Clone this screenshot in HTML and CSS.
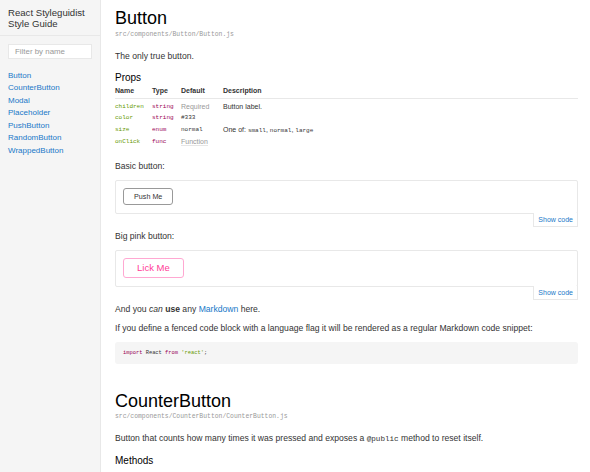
FILE: index.html
```html
<!DOCTYPE html>
<html lang="en">
<head>
<meta charset="utf-8">
<title>React Styleguidist Style Guide</title>
<link rel="stylesheet" href="styles.css">
</head>
<body>
<div class="layout">
  <aside class="sidebar">
    <header class="side-header">React Styleguidist<br>Style Guide</header>
    <div class="search"><input class="filter" type="text" placeholder="Filter by name"></div>
    <nav class="nav">
      <a href="#">Button</a>
      <a href="#">CounterButton</a>
      <a href="#">Modal</a>
      <a href="#">Placeholder</a>
      <a href="#">PushButton</a>
      <a href="#">RandomButton</a>
      <a href="#">WrappedButton</a>
    </nav>
  </aside>
  <main class="main">
    <section class="component">
      <h1 class="title">Button</h1>
      <div class="path">src/components/Button/Button.js</div>
      <p class="text desc">The only true button.</p>
      <h3 class="subtitle">Props</h3>
      <table class="props">
        <thead>
          <tr><th class="c1">Name</th><th class="c2">Type</th><th class="c3">Default</th><th>Description</th></tr>
        </thead>
        <tbody>
          <tr><td class="name">children</td><td class="type">string</td><td class="muted">Required</td><td>Button label.</td></tr>
          <tr><td class="name">color</td><td class="type">string</td><td class="mono">#333</td><td></td></tr>
          <tr><td class="name">size</td><td class="type">enum</td><td class="mono">normal</td><td>One of: <code>small</code>, <code>normal</code>, <code>large</code></td></tr>
          <tr><td class="name">onClick</td><td class="type">func</td><td class="muted"><span class="abbr">Function</span></td><td></td></tr>
        </tbody>
      </table>

      <p class="text example-label">Basic button:</p>
      <div class="example">
        <div class="preview"><button class="btn">Push Me</button></div>
        <div class="tabs"><a class="show-code" href="#">Show code</a></div>
      </div>

      <p class="text example-label tight">Big pink button:</p>
      <div class="example">
        <div class="preview"><button class="btn btn-pink">Lick Me</button></div>
        <div class="tabs"><a class="show-code" href="#">Show code</a></div>
      </div>

      <p class="text md1">And you <em>can</em> <strong>use</strong> any <a href="#">Markdown</a> here.</p>
      <p class="text md2">If you define a fenced code block with a language flag it will be rendered as a regular Markdown code snippet:</p>
      <pre class="code"><span class="kw">import</span> React <span class="kw">from</span> <span class="str">'react'</span>;</pre>
    </section>

    <section class="component second">
      <h1 class="title">CounterButton</h1>
      <div class="path">src/components/CounterButton/CounterButton.js</div>
      <p class="text desc">Button that counts how many times it was pressed and exposes a <code class="inline">@public</code> method to reset itself.</p>
      <h3 class="subtitle">Methods</h3>
    </section>
  </main>
</div>
</body>
</html>
```

FILE: styles.css
```css
html, body {
  margin: 0;
  padding: 0;
  background: #fff;
  overflow: hidden;
}
body {
  font-family: "Liberation Sans", Arial, Helvetica, sans-serif;
  color: #333;
}
.layout {
  display: flex;
  align-items: stretch;
  min-height: 100vh;
}
.sidebar {
  width: 100px;
  flex: 0 0 100px;
  background: #f5f5f5;
  border-right: 1px solid #e8e8e8;
  min-height: 100vh;
}
.side-header {
  font-size: 9.6px;
  line-height: 11px;
  padding: 6.5px 8px 6.5px;
  border-bottom: 1px solid #e8e8e8;
  color: #333;
}
.search {
  padding: 8px 8px 0;
}
.filter {
  display: block;
  box-sizing: border-box;
  width: 84px;
  height: 15px;
  margin: 0;
  padding: 0 6px;
  border: 1px solid #e8e8e8;
  background: #fff;
  font-family: "Liberation Sans", Arial, sans-serif;
  font-size: 7.9px;
  color: #333;
  outline: none;
}
.filter::placeholder {
  color: #999;
}
.nav {
  display: flex;
  flex-direction: column;
  padding: 10.5px 8px 0;
}
.nav a {
  font-size: 8px;
  line-height: 12.5px;
  color: #1978c8;
  text-decoration: none;
}
.main {
  flex: 1 1 auto;
  min-width: 0;
  padding: 8px 12px 0 14px;
}
.title {
  margin: 0;
  font-size: 18px;
  line-height: 20px;
  font-weight: normal;
  color: #000;
}
.path {
  margin-top: 2px;
  font-family: "Liberation Mono", "Courier New", monospace;
  font-size: 6.4px;
  line-height: 10px;
  color: #999;
}
.text {
  margin: 0;
  font-size: 8.6px;
  line-height: 12px;
  color: #333;
}
.desc {
  margin-top: 10px;
}
.subtitle {
  margin: 10px 0 0;
  font-size: 10px;
  line-height: 12px;
  font-weight: normal;
  color: #000;
}
.props {
  width: 100%;
  border-collapse: collapse;
  font-size: 7px;
}
.props th {
  text-align: left;
  font-weight: bold;
  color: #333;
  line-height: 9px;
  padding: 2px 0 3px;
  border-bottom: 1px solid #e8e8e8;
}
.props th.c1 { width: 37px; }
.props th.c2 { width: 29px; }
.props th.c3 { width: 42px; }
.props td {
  padding: 2.3px 0 0;
  height: 9px;
  line-height: 9px;
  vertical-align: top;
  color: #333;
}
.props tbody tr:first-child td {
  padding-top: 3px;
}
.props td.name {
  font-family: "Liberation Mono", monospace;
  font-size: 6px;
  color: #690;
}
.props td.type {
  font-family: "Liberation Mono", monospace;
  font-size: 6px;
  color: #905;
}
.props td.mono {
  font-family: "Liberation Mono", monospace;
  font-size: 6px;
  color: #333;
}
.props td.muted {
  color: #999;
}
.props .abbr {
  border-bottom: 1px solid #e6e6e6;
}
.props code {
  font-family: "Liberation Mono", monospace;
  font-size: 6px;
}
.example-label {
  margin-top: 14px;
}
.example-label.tight {
  margin-top: 3px;
}
.example {
  margin-top: 8px;
}
.preview {
  border: 1px solid #e8e8e8;
  border-radius: 2px;
  padding: 7px 7px 8px;
  line-height: 0;
}
.btn {
  box-sizing: border-box;
  height: 17px;
  padding: 0 10px;
  margin: 0;
  background: #fff;
  border: 1px solid #999;
  border-radius: 3px;
  font-family: "Liberation Sans", Arial, sans-serif;
  font-size: 7.2px;
  line-height: 15px;
  color: #333;
}
.btn-pink {
  height: 20px;
  padding: 0 13px;
  border: 1px solid #ffa8d2;
  font-size: 9.5px;
  line-height: 18px;
  color: #ff3d98;
}
.tabs {
  display: flex;
  justify-content: flex-end;
}
.show-code {
  display: block;
  margin-top: -1px;
  padding: 0 4px;
  height: 13px;
  line-height: 13px;
  border: 1px solid #e8e8e8;
  border-top: none;
  background: #fff;
  font-size: 7px;
  color: #1978c8;
  text-decoration: none;
}
.md1 {
  margin-top: 3px;
}
.md1 a {
  color: #1978c8;
  text-decoration: none;
}
.md2 {
  margin-top: 7px;
}
.code {
  margin: 8px 0 0;
  padding: 0 8px;
  height: 22px;
  line-height: 22px;
  background: #f5f5f5;
  border-radius: 3px;
  font-family: "Liberation Mono", monospace;
  font-size: 5.4px;
  color: #333;
}
.code .kw { color: #905; }
.code .str { color: #690; }
.second {
  margin-top: 27px;
}
.second .path {
  margin-top: 1px;
}
.inline {
  font-family: "Liberation Mono", monospace;
  font-size: 7.6px;
}
```
